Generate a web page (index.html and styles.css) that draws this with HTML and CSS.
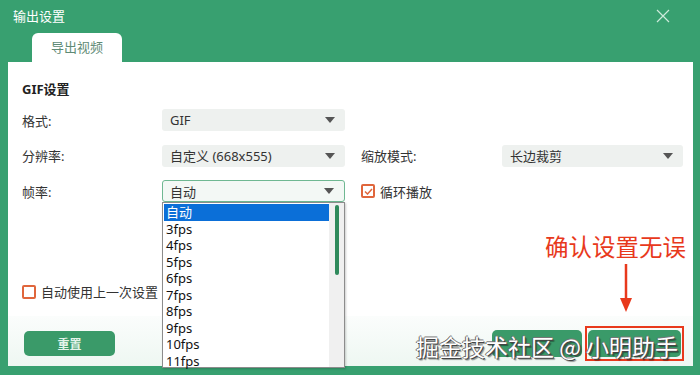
FILE: index.html
```html
<!DOCTYPE html>
<html lang="zh-CN">
<head>
    <meta charset="UTF-8">
    <meta name="viewport" content="width=device-width, initial-scale=1.0">
    <title>输出设置</title>
    <link rel="stylesheet" href="styles.css">
</head>
<body>
    <div id="dialog">
        <div class="titlebar">
            <span class="title">输出设置</span>
            <svg class="close" width="14" height="14" viewBox="0 0 14 14">
                <path d="M1 1 L13 13 M13 1 L1 13" stroke="#cdeadb" stroke-width="1.2" fill="none"/>
            </svg>
        </div>
        <div class="tabs">
            <div class="tab">导出视频</div>
        </div>
        <div class="panel">
            <h2>GIF设置</h2>
            <div class="grid">
                <label>格式:</label>
                <div class="select"><span>GIF</span><i class="arrow"></i></div>
                <span></span>
                <span></span>

                <label>分辨率:</label>
                <div class="select"><span>自定义 (668x555)</span><i class="arrow"></i></div>
                <label class="right">缩放模式:</label>
                <div class="select"><span>长边裁剪</span><i class="arrow"></i></div>

                <label>帧率:</label>
                <div class="select active"><span>自动</span><i class="arrow"></i></div>
                <div class="check right">
                    <span class="box checked">
                        <svg width="9" height="7" viewBox="0 0 9 7"><path d="M1 3.5 L3.5 6 L8 1" stroke="#e0663c" stroke-width="1.5" fill="none"/></svg>
                    </span>
                    循环播放
                </div>
                <span></span>
            </div>

            <div class="check auto">
                <span class="box"></span>
                自动使用上一次设置（
            </div>

            <div class="footer">
                <button class="btn">重置</button>
                <div class="actions">
                    <button class="btn wide"></button>
                    <span class="mark"><button class="btn wide"></button></span>
                </div>
            </div>

            <div class="dropdown">
                <ul>
                    <li class="selected">自动</li>
                    <li>3fps</li>
                    <li>4fps</li>
                    <li>5fps</li>
                    <li>6fps</li>
                    <li>7fps</li>
                    <li>8fps</li>
                    <li>9fps</li>
                    <li>10fps</li>
                    <li>11fps</li>
                </ul>
                <div class="scroll"><div class="thumb"></div></div>
            </div>
        </div>

        <div class="note">确认设置无误</div>
        <svg class="pointer" width="14" height="50" viewBox="0 0 14 50">
            <path d="M7 0 L7 36" stroke="#e8391c" stroke-width="2.5"/>
            <path d="M1 34 L13 34 L7 48 Z" fill="#e8391c"/>
        </svg>
        <div class="watermark">掘金技术社区 @ 小明助手</div>
    </div>
</body>
</html>
```

FILE: styles.css
```css
body {
    margin: 0;
    font-family: "Noto Sans", "Noto Sans CJK SC", sans-serif;
    background-color: #38a070;
}

#dialog {
    position: relative;
    width: 700px;
    height: 375px;
    overflow: hidden;
    background-color: #38a070;
}

.titlebar {
    height: 31px;
    display: flex;
    align-items: center;
    justify-content: space-between;
    padding: 0 30px 0 13px;
}

.title {
    color: #fff;
    font-size: 13px;
}

.tabs {
    display: flex;
    padding-left: 32px;
    margin-top: 2px;
}

.tab {
    width: 90px;
    height: 29px;
    line-height: 29px;
    text-align: center;
    background-color: #fff;
    border-radius: 6px 6px 0 0;
    color: #5e8a75;
    font-size: 13px;
}

.panel {
    position: relative;
    margin: 0 7px 0 8px;
    height: 304px;
    background-color: #fff;
    display: flex;
    flex-direction: column;
    padding: 0 10px 0 14px;
}

.panel h2 {
    margin: 18px 0 11px;
    font-size: 13px;
    line-height: 18px;
    color: #222;
    font-weight: bold;
}

.grid {
    display: grid;
    grid-template-columns: 140px 183px 157px 181px;
    row-gap: 13.5px;
    align-items: center;
}

.grid .right {
    padding-left: 16px;
}

.grid label {
    font-size: 13px;
    color: #333;
}

.select {
    height: 22px;
    background-color: #eef1ef;
    border-radius: 3px;
    display: flex;
    align-items: center;
    justify-content: space-between;
    padding: 0 10px 0 8px;
    font-size: 13px;
    color: #333;
    box-sizing: border-box;
}

.select.active {
    background-color: #f3f8f5;
    border: 1px solid #6fb892;
    padding-left: 7px;
}

.arrow {
    width: 0;
    height: 0;
    border-left: 5px solid transparent;
    border-right: 5px solid transparent;
    border-top: 6px solid #555;
}

.check {
    display: flex;
    align-items: center;
    gap: 5px;
    font-size: 13px;
    color: #333;
}

.box {
    width: 10px;
    height: 10px;
    border: 2px solid #e0663c;
    border-radius: 2px;
    display: flex;
    align-items: center;
    justify-content: center;
}

.check.auto {
    margin-top: 80px;
}

.footer {
    margin-top: auto;
    margin-left: -14px;
    margin-right: -10px;
    padding: 10px 9px 5px 16px;
    display: flex;
    justify-content: space-between;
    align-items: center;
    background: linear-gradient(#fbfdfc, #eef7f2);
}

.btn {
    width: 91px;
    height: 25px;
    border: none;
    border-radius: 5px;
    background-color: #3a9a69;
    color: #e4f3ea;
    font-size: 12px;
    font-weight: bold;
    font-family: "Noto Sans CJK SC", sans-serif;
}

.actions {
    display: flex;
    align-items: center;
    gap: 3px;
}

.btn.wide {
    width: 90px;
    height: 27px;
    display: block;
}

.mark {
    border: 2px solid #e8391c;
    padding: 2px 1px 2px 1px;
}

.mark .btn {
    width: 93px;
}

.dropdown {
    position: absolute;
    left: 154px;
    top: 140px;
    width: 183px;
    height: 166px;
    background-color: #fff;
    border: 1px solid #8c8c8c;
    box-sizing: border-box;
    display: flex;
    box-shadow: 1px 1px 2px rgba(0, 0, 0, 0.2);
}

.dropdown ul {
    list-style: none;
    margin: 0;
    padding: 1px 0 0 1px;
    flex: 1;
}

.dropdown li {
    height: 16.5px;
    line-height: 16.5px;
    font-size: 13px;
    color: #111;
    padding-left: 2px;
}

.dropdown li.selected {
    background-color: #0b6fd8;
    color: #fff;
}

.scroll {
    width: 15px;
    background-color: #f0f0f0;
    display: flex;
    justify-content: center;
    padding-top: 2px;
}

.thumb {
    width: 4px;
    height: 70px;
    background-color: #2f8a5c;
    border-radius: 2px;
}

.note {
    position: absolute;
    left: 545px;
    top: 229px;
    font-size: 23.5px;
    color: #e8391c;
    font-family: "Noto Sans CJK SC", sans-serif;
}

.pointer {
    position: absolute;
    left: 619px;
    top: 264px;
}

.watermark {
    position: absolute;
    left: 416px;
    top: 329px;
    font-size: 23px;
    color: #fff;
    font-family: "Noto Sans CJK SC", sans-serif;
    text-shadow: 1px 1px 0 #444, -1px 0 0 #666, 0 -1px 0 #777, 2px 2px 1px rgba(0, 0, 0, 0.4);
    white-space: nowrap;
}
```
